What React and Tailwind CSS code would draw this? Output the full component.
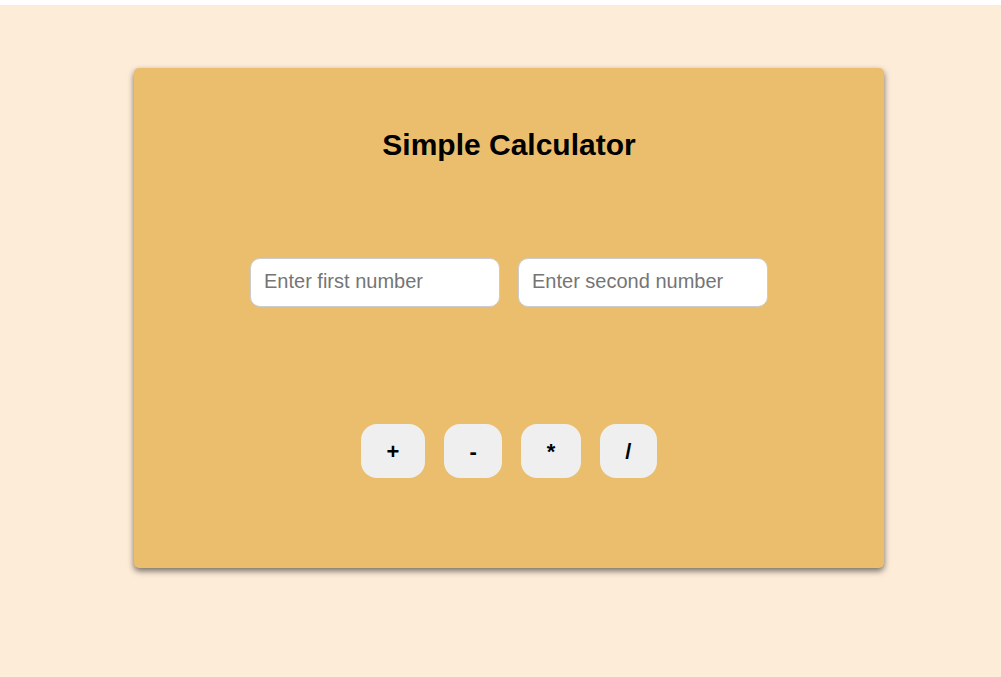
import React from 'react';

const ops = ['+', '-', '*', '/'];

const App = () => {
  const [a, setA] = React.useState('');
  const [b, setB] = React.useState('');

  return (
    <div className="min-h-screen bg-white" style={{ fontFamily: '"Liberation Sans", Arial, sans-serif' }}>
      <div className="mt-[5px] h-[672px] bg-[#fdecd8] pt-[63px]">
        {/* Calculator card */}
        <div className="ml-[134px] flex h-[500px] w-[750px] flex-col items-center rounded-[5px] bg-[#ebbe6d] pt-[59px] shadow-[0_3px_6px_rgba(0,0,0,0.55)]">
          <h2 className="h-9 text-3xl font-bold leading-9 text-black">Simple Calculator</h2>

          <div className="mt-[95px] flex gap-[18px]">
            <input
              type="number"
              value={a}
              onChange={(e) => setA(e.target.value)}
              placeholder="Enter first number"
              className="h-[49px] w-[250px] rounded-[10px] border border-[#cccccc] bg-white px-[13px] pb-[2px] text-[20px] text-black outline-none placeholder:text-[#757575]"
            />
            <input
              type="number"
              value={b}
              onChange={(e) => setB(e.target.value)}
              placeholder="Enter second number"
              className="h-[49px] w-[250px] rounded-[10px] border border-[#cccccc] bg-white px-[13px] pb-[2px] text-[20px] text-black outline-none placeholder:text-[#757575]"
            />
          </div>

          <div className="mt-[117px] flex gap-[19px]">
            {ops.map((op) => (
              <button
                key={op}
                className="h-[54px] rounded-[16px] bg-[#efefef] px-[25.5px] text-[22px] font-bold text-black"
              >
                {op}
              </button>
            ))}
          </div>
        </div>
      </div>
    </div>
  );
};

export default App;
